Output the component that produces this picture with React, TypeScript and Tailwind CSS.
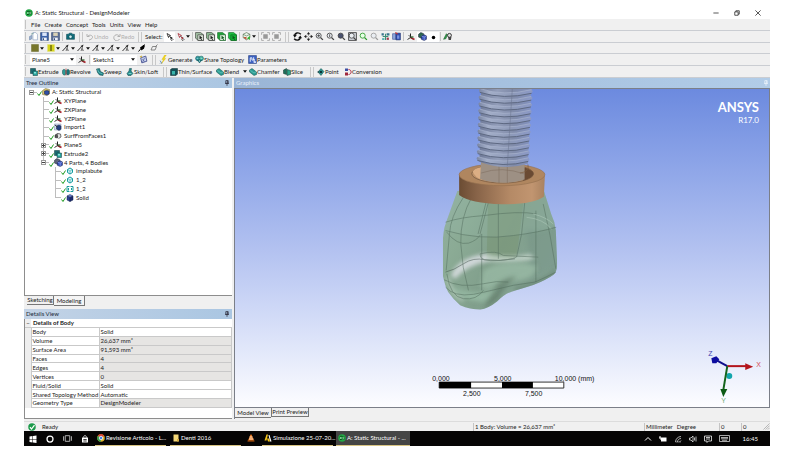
import type { ReactNode } from "react";

type Children = { children?: ReactNode };

/* ---------- icons ---------- */

const Svg = ({ children, size = "size-2" }: Children & { size?: string }) => (
  <svg viewBox="0 0 16 16" className={`${size} shrink-0`} fill="none" aria-hidden="true">
    {children}
  </svg>
);

const Cube = ({ a = "#9fb4e8", b = "#3350a8", c = "#1d2f6e", line = "#15204a" }) => (
  <Svg>
    <path d="M8 1l6 3-6 3-6-3z" fill={a} stroke={line} />
    <path d="M2 4l6 3v8l-6-3z" fill={b} stroke={line} />
    <path d="M14 4L8 7v8l6-3z" fill={c} stroke={line} />
  </Svg>
);

const Parts = ({ back = "#5d6478" }) => (
  <Svg size="size-[9px]">
    <path d="M1 4l4-3 5 2v6l-4 2-5-2z" fill={back} stroke="#22283c" />
    <path d="M6 7l5-2 4 2v6l-4 2-5-2z" fill="#3a55c0" stroke="#15204a" />
    <path d="M6 7l5 2 4-2M11 9v6" stroke="#a9b8ee" />
  </Svg>
);

const Axes = () => (
  <Svg>
    <path d="M7 10V1" stroke="#222" strokeWidth="2" />
    <path d="M7 9l8 4" stroke="#b3202a" strokeWidth="3" />
    <path d="M7 9l-6 4" stroke="#333" strokeWidth="2" />
    <path d="M3 4l9 9" stroke="#333" strokeWidth="1.500" />
    <path d="M7 8h6" stroke="#27602b" strokeWidth="2.500" />
  </Svg>
);

const Save = ({ alt = false }) => (
  <Svg size="size-[9px]">
    <path d="M1 1h14v14H1z" fill={alt ? "#5d6f94" : "#3c62a8"} stroke="#27406f" />
    <path d="M4 1h8v6H4z" fill={alt ? "#d9d2b6" : "#dbe6fa"} />
    <path d="M4 10h8v5H4z" fill="#eef2fa" />
    <path d="M5 11h2v3H5z" fill="#27406f" />
  </Svg>
);

const NewDoc = () => (
  <Svg size="size-[9px]">
    <path d="M7 1h5l3 3v10H7z" fill="#fff" stroke="#7d93b8" />
    <path d="M1 14V8l4-2v6z" fill="#9eb3d2" stroke="#6480a8" />
    <path d="M4 4l4-2" stroke="#8aa" strokeWidth="2" />
  </Svg>
);

const Camera = () => (
  <Svg size="size-[9px]">
    <path d="M1 4h3l2-2h4l2 2h3v9H1z" fill="#0e6f7d" stroke="#0b444e" />
    <circle cx="8" cy="8.500" r="3" fill="#c8f1f4" stroke="#073239" />
  </Svg>
);

const UndoIcon = ({ flip = false }) => (
  <Svg>
    <path
      d={flip ? "M14 2v5H9M13 7a6 6 0 1 0 0 5" : "M2 2v5h5M3 7c4-5 11-2 10 2-1 3-4 4-7 5"}
      stroke="#b0b0b0"
      strokeWidth="2"
    />
  </Svg>
);

const Cursor = ({ color = "#111" }) => (
  <Svg>
    <path d="M2 1l7 4-3 1-1 3z" fill="#fff" stroke={color} strokeWidth="1.500" />
    <path d="M7 6l7 7-2 2-3-2" stroke="#222" strokeWidth="1.500" />
    <path d="M8 8l5 1-3 4z" fill={color} />
  </Svg>
);

const SelBox = ({ front = "#e6e6e6", back = "#5c8f61", line = "#222" }) => (
  <Svg size="size-[9px]">
    <path d="M1 1h9l5 4v10H6l-5-4z" fill={back} stroke={line} />
    <path d="M5 5h10v10H5z" fill={front} stroke={line} />
    <path d="M8 6v7l1.500-1.500 2 3 1-1-1.500-2.500 2-1z" fill={line} />
  </Svg>
);

const Extend = () => (
  <Svg size="size-[9px]">
    <path d="M8 1l6 3v6l-6 4-6-4V4z" fill="#e9f4e6" stroke="#3b5b3b" />
    <path d="M2 4l6 3 6-3" stroke="#4a6b4a" />
    <path d="M9 11l5-4v7z" fill="#2bb02b" />
    <path d="M2 9l6 5v-5z" fill="#c05a3a" />
  </Svg>
);

const Fit = () => (
  <Svg size="size-[9px]">
    <path d="M1 5V1h4M11 1h4v4M15 11v4h-4M5 15H1v-4" stroke="#a5a5a5" strokeWidth="1.500" />
    <path d="M4 4h8v8H4z" fill="#999" />
  </Svg>
);

const Rotate = () => (
  <Svg size="size-[9px]">
    <path d="M14 4C10 0 3 1 3 7M2 12c4 4 11 3 11-3" stroke="#111" strokeWidth="2.500" />
    <path d="M0 5h7L3 10zM9 11h7l-3-5z" fill="#111" />
  </Svg>
);

const Pan = () => (
  <Svg size="size-[9px]">
    <path d="M8 0l3 4H5zM8 16l3-4H5zM0 8l4-3v6zM16 8l-4-3v6z" fill="#222" />
    <path d="M8 4v2M8 10v2M4 8h2M10 8h2" stroke="#333" strokeWidth="1.500" />
  </Svg>
);

const Lens = ({ color = "#444", fill = "#e9edf2", mark = "", box = false }) => (
  <Svg size="size-[9px]">
    {box && <path d="M1 1h14v14H1z" stroke="#444" strokeWidth="1.500" fill="#cfd3da" />}
    <circle cx="6.500" cy="6.500" r="4.500" fill={fill} stroke={color} strokeWidth="1.500" />
    <path d="M10 10l4 4" stroke={color} strokeWidth="2.500" />
    <path d={mark} stroke={color} strokeWidth="1.500" />
  </Svg>
);

const Tree4 = () => (
  <Svg size="size-[9px]">
    <path d="M1 2h4v4H1zM10 2h5v4h-5z" fill="#36748c" />
    <path d="M3 8h10M8 3v11" stroke="#3b8f76" strokeWidth="2" />
    <path d="M2 11h4v3H2z" fill="#4aa" />
    <path d="M10 10h4v4h-4z" fill="#a0384c" />
  </Svg>
);

const LookAt = () => (
  <Svg size="size-[9px]">
    <path d="M1 3h6v10H1z" fill="#8fa6dc" stroke="#334b8f" />
    <path d="M7 2h8v12H7z" fill="#2e4fb2" stroke="#20306b" />
    <path d="M9 6h4v6H9z" fill="#7a93e0" />
    <path d="M6 1l4 3" stroke="#c33" strokeWidth="2" />
  </Svg>
);

const Dot = () => (
  <Svg>
    <circle cx="7" cy="9" r="3.500" fill="#000" />
  </Svg>
);

const Brush = () => (
  <Svg size="size-[9px]">
    <path d="M1 13L6 3l2 2-3 7z" fill="#2c9a4a" stroke="#235c30" />
    <circle cx="11.500" cy="6" r="3.500" fill="#ddd" stroke="#222" strokeWidth="1.500" />
    <path d="M9 9l1 5h4l1-5" fill="#444" />
  </Svg>
);

const LineTool = () => (
  <Svg>
    <path d="M1 14L12 2" stroke="#333" strokeWidth="2" />
    <path d="M7 4l6-3-2 7z" fill="#333" />
    <path d="M8 14l2-6 3 6M9 12h3" stroke="#555" strokeWidth="1.500" />
  </Svg>
);

const Pen = () => (
  <Svg>
    <path d="M1 15L13 1" stroke="#000" strokeWidth="2" />
    <path d="M4 7l7-5 3 1-2 6-5 4z" fill="#000" />
  </Svg>
);

const PlaneOutline = () => (
  <Svg>
    <path d="M5 5h8l-3 7H2z" stroke="#666" strokeWidth="1.500" />
    <path d="M11 5l4-4" stroke="#666" strokeWidth="1.500" />
  </Svg>
);

const Swatch = ({ color = "#77762b", split = false }) => (
  <Svg>
    <path d="M1 1h14v14H1z" fill={color} stroke={split ? "#e4e27a" : "#6b6b2d"} />
    {split && <path d="M8 2v12" stroke="#6e6d10" strokeWidth="3" />}
  </Svg>
);

const NewSketch = () => (
  <Svg size="size-[9px]">
    <path d="M3 5l9-3 2 9-9 3z" fill="#c9d2ef" stroke="#3f4b8c" strokeWidth="1.500" />
    <path d="M6 7l4 5M10 5l-4 8" stroke="#3f4b8c" />
    <path d="M1 3l4-2v4z" fill="#c7a92e" />
  </Svg>
);

const Bolt = () => (
  <Svg size="size-[9px]">
    <path d="M10 0L5 8h3l-4 8 8-10H9l4-6z" fill="#f6d813" stroke="#c2a400" strokeWidth="0.500" />
    <path d="M2 10l3 5M3 14l-1 1" stroke="#477ab4" strokeWidth="1.500" />
  </Svg>
);

const Share = () => (
  <Svg size="size-[9px]">
    <circle cx="5" cy="6" r="4" fill="#2d9aa0" stroke="#10575c" />
    <circle cx="11" cy="6" r="4" fill="#46b8a6" stroke="#10575c" />
    <path d="M4 9l4 5 4-5z" fill="#1f7f86" stroke="#10575c" />
    <path d="M3 6h3M10 6h3M8 9v3" stroke="#d6f5f2" />
  </Svg>
);

const Param = () => (
  <Svg size="size-[9px]">
    <path d="M1 1h14v14H1z" fill="#3d63c4" stroke="#20377b" />
    <path d="M4 12V5h3v4h3V4M11 12V7" stroke="#fff" strokeWidth="1.500" />
    <path d="M10 11h4v3h-4z" fill="#dfe7ff" />
  </Svg>
);

const Solid = ({ shape = "block" }) => {
  const shapes: Record<string, ReactNode> = {
    block: (
      <>
        <path d="M1 1h10v10H1z" fill="#1c6a70" stroke="#0b3438" />
        <path d="M6 6h9v9H6z" fill="#28a39b" stroke="#0b3438" />
        <path d="M8 8h4v3H8z" fill="#8fe3dc" />
      </>
    ),
    revolve: (
      <>
        <path d="M1 6c0-4 5-4 6-1v8c-2 3-6 0-6-3z" fill="#2d9c97" stroke="#124b4b" />
        <path d="M9 5c2-4 6-2 6 1v5c0 3-5 4-6 1z" fill="#1a7379" stroke="#124b4b" />
        <path d="M8 1v14" stroke="#b03030" strokeWidth="1.500" />
      </>
    ),
    sweep: (
      <>
        <path d="M1 2l6-1 2 6 6 3-1 5-7-1-4-5z" fill="#1f868a" stroke="#0d3d40" />
        <path d="M3 3l3 6 7 3" stroke="#9be3dd" />
      </>
    ),
    skin: (
      <>
        <path d="M7 1h4l-1 5 4 5-4 4H4l-2-4 4-5z" fill="#258f90" stroke="#0d3d40" />
        <path d="M5 11h6" stroke="#9be3dd" strokeWidth="1.500" />
      </>
    ),
    thin: (
      <>
        <path d="M1 3l3-2h11v11l-3 3H1z" fill="#134f55" stroke="#08292c" />
        <path d="M4 6h6v7H4z" fill="#39b3a9" />
      </>
    ),
    blend: (
      <>
        <path d="M1 4l5-3 9 7v5l-5 2-9-7z" fill="#2a9c93" stroke="#0f4b48" />
        <path d="M3 5l7 5 4-2" stroke="#8fd8cf" />
      </>
    ),
    slice: (
      <>
        <path d="M1 4l6-3v12l-6-2z" fill="#1d6d58" stroke="#0b332a" />
        <path d="M8 3l7 2v8l-7 2z" fill="#2ea287" stroke="#0b332a" />
      </>
    ),
    point: (
      <>
        <path d="M8 1l6 6-6 8-6-7z" fill="#2a8f8b" stroke="#12504e" />
        <path d="M6 6h4v4H6z" fill="#0a3335" />
        <path d="M1 8h4" stroke="#0a3335" strokeWidth="2" />
      </>
    ),
    convert: (
      <>
        <path d="M2 1h6v5H2z" fill="#3a4ea5" />
        <path d="M2 9h6v6H2z" fill="#a0273c" />
        <path d="M9 3c7 0 7 10 0 10" stroke="#b0304a" strokeWidth="2" />
      </>
    ),
  };
  return <Svg>{shapes[shape]}</Svg>;
};

const BodyIcon = ({ dashed = false }) => (
  <Svg>
    {dashed ? (
      <path d="M2 3h5M9 3h5v10H9M7 13H2V3M5 6v5M11 6v4" stroke="#159a9c" strokeWidth="2" />
    ) : (
      <>
        <path d="M8 2l5 3v6l-5 3-5-3V5z" fill="#d8f4f4" stroke="#149a9f" strokeWidth="2" />
        <path d="M3 5l5 3 5-3M8 8v6" stroke="#149a9f" />
      </>
    )}
  </Svg>
);

const SurfIcon = () => (
  <Svg>
    <path d="M2 6l5-3 3 3-3 6-5-1z" fill="#555" stroke="#222" />
    <path d="M7 3l6 1 1 6-5 3" fill="#e3e3e3" stroke="#444" strokeWidth="1.500" />
  </Svg>
);

const ImportIcon = () => (
  <Svg>
    <path d="M1 2h13v12H1z" fill="#d4dcee" stroke="#7d8bab" />
    <path d="M5 6l5-2 4 2v6l-4 3-5-3z" fill="#243e7b" stroke="#14234a" />
    <path d="M2 4l5 4" stroke="#333" strokeWidth="2" />
  </Svg>
);

const RootIcon = () => (
  <Svg>
    <path d="M1 5l6-4 8 2v9l-5 3-9-2z" fill="#d7c26b" stroke="#6c6843" />
    <path d="M5 6l5-1 4 1v6l-4 2-5-2z" fill="#2f4fa6" stroke="#16234d" />
  </Svg>
);

const Check = () => (
  <span className="flex h-[8px] shrink-0 items-end">
    <svg viewBox="0 0 10 10" className="size-[5px]" fill="none" aria-hidden="true">
      <path d="M1 5l3 4 5-8" stroke="#1d9a1d" strokeWidth="2" />
    </svg>
  </span>
);

const Pin = ({ color = "#334" }) => (
  <svg viewBox="0 0 10 14" className="h-[6px] w-1" fill="none" aria-hidden="true">
    <path d="M2 1h6v7H2zM0 8h10M5 8v6M6 1v7" stroke={color} strokeWidth="2" />
  </svg>
);

const Caret = () => (
  <svg viewBox="0 0 8 5" className="h-[3px] w-1 shrink-0" aria-hidden="true">
    <path d="M0 0h8L4 5z" fill="#111" />
  </svg>
);

const AppIcon = () => (
  <Svg>
    <circle cx="8" cy="8" r="7.500" fill="#22a845" />
    <path d="M3 6c4-4 9 1 9 5M4 11c3 1 7-2 8-6" stroke="#0b4a1c" strokeWidth="2" />
    <path d="M4 8h3M9 8h3" stroke="#d4f5da" strokeWidth="2" />
  </Svg>
);

/* ---------- toolbar parts ---------- */

const Grip = () => <span className="mx-px h-[9px] w-px shrink-0 bg-[#c4c4c4]" />;

const Divider = () => (
  <span className="mx-[3px] flex h-[10px] w-1 shrink-0 justify-between">
    <i className="w-px bg-[#c8c8c8]" />
    <i className="w-px bg-[#c8c8c8]" />
  </span>
);

const Tool = ({
  label,
  w = "w-[11px]",
  on = false,
  drop = false,
  children,
}: Children & { label: string; w?: string; on?: boolean; drop?: boolean }) => (
  <button
    type="button"
    aria-label={label}
    className={`flex h-[10px] ${w} shrink-0 items-center justify-center gap-px ${on ? "bg-white" : ""}`}
  >
    {children}
    {drop && <Caret />}
  </button>
);

const TextTool = ({
  icon,
  w,
  drop = false,
  children,
}: Children & { icon: ReactNode; w: string; drop?: boolean }) => (
  <button type="button" className={`flex ${w} shrink-0 items-center whitespace-nowrap`}>
    {icon}
    <span>{children}</span>
    {drop && (
      <span className="ml-1">
        <Caret />
      </span>
    )}
  </button>
);

const Bar = ({ children, h = "h-3" }: Children & { h?: string }) => (
  <div className={`flex ${h} shrink-0 items-center border-b border-[#cacdd2] bg-[#f0f0f0]`}>
    <Grip />
    {children}
  </div>
);

const Pick = ({ label, value }: { label: string; value: string }) => (
  <label className="relative flex h-[10px] w-[46px] shrink-0 items-center bg-white">
    <select aria-label={label} defaultValue={value} className="w-full appearance-none pl-[2px] leading-none">
      <option>{value}</option>
    </select>
    <span className="pointer-events-none absolute right-[2px] flex">
      <Caret />
    </span>
  </label>
);

const Toolbars = () => (
  <>
    <nav className="flex h-3 shrink-0 items-center border-b border-[#cacdd2] bg-[#f0f0f0] text-[#222]">
      <Grip />
      <div className="ml-1 flex gap-1">
        {["File", "Create", "Concept", "Tools", "Units", "View", "Help"].map((m) => (
          <button type="button" key={m}>
            {m}
          </button>
        ))}
      </div>
    </nav>

    <Bar>
      <span className="w-px" />
      <Tool label="New"><NewDoc /></Tool>
      <Tool label="Save"><Save /></Tool>
      <Tool label="Save As"><Save alt /></Tool>
      <Grip />
      <Tool label="Image Capture" w="w-3"><Camera /></Tool>
      <Divider />
      <div className="flex text-[#b0b0b0]">
        <TextTool icon={<UndoIcon />} w="w-[27px]">Undo</TextTool>
        <TextTool icon={<UndoIcon flip />} w="w-[22px]">Redo</TextTool>
      </div>
      <Divider />
      <span className="w-[19px]">Select:</span>
      <Tool label="New Selection" on><Cursor /></Tool>
      <Tool label="Select Mode" w="w-4" drop><Cursor color="#a3202b" /></Tool>
      <Grip />
      <Tool label="Points"><SelBox front="#dfeadd" back="#a5c4a6" /></Tool>
      <Tool label="Edges"><SelBox front="#e8efe6" back="#8fbf95" /></Tool>
      <Tool label="Faces" on><SelBox front="#e6f5e4" back="#1fa83a" line="#145a20" /></Tool>
      <Tool label="Bodies"><SelBox front="#15b537" back="#1ec544" line="#0b5a1b" /></Tool>
      <Grip />
      <Tool label="Extend Selection" w="w-4" drop><Extend /></Tool>
      <Grip />
      <Tool label="Expand Faces"><Fit /></Tool>
      <Tool label="Shrink Faces"><Fit /></Tool>
      <Divider />
      <Tool label="Rotate"><Rotate /></Tool>
      <Tool label="Pan"><Pan /></Tool>
      <Tool label="Zoom"><Lens mark="M4 6.500h5M6.500 4v5" /></Tool>
      <Tool label="Box Zoom"><Lens mark="M6.500 4v5" /></Tool>
      <Tool label="Zoom to Fit"><Lens fill="#4a5270" /></Tool>
      <Tool label="Magnifier"><Lens box /></Tool>
      <Tool label="Previous View"><Lens color="#2b9a2b" fill="#e6ffe6" /></Tool>
      <Tool label="Next View"><Lens color="#9a9a9a" /></Tool>
      <Tool label="ISO View"><Tree4 /></Tool>
      <Tool label="Look At"><LookAt /></Tool>
      <Grip />
      <Tool label="Display Plane" w="w-3"><Axes /></Tool>
      <Tool label="Display Model" on><Parts back="#2d6a4f" /></Tool>
      <Tool label="Display Points" on><Dot /></Tool>
      <Grip />
      <Tool label="Display Edge Joints"><Brush /></Tool>
    </Bar>

    <Bar h="h-[11px]">
      <span className="w-[2px]" />
      <Tool label="Face Color" w="w-4" drop><Swatch /></Tool>
      <Tool label="Edge Coloring" w="w-4" drop><Swatch color="#d5d31e" split /></Tool>
      {["Free", "Single", "Double", "Triple", "Multiple"].map((n) => (
        <Tool key={n} label={n} w="w-[15px]" drop><LineTool /></Tool>
      ))}
      <Tool label="Edge Direction" w="w-3"><Pen /></Tool>
      <Tool label="Vertices"><PlaneOutline /></Tool>
    </Bar>

    <Bar>
      <span className="w-[3px]" />
      <Pick label="Active plane" value="Plane5" />
      <Tool label="New Plane" w="w-3"><Axes /></Tool>
      <Grip />
      <Pick label="Active sketch" value="Sketch1" />
      <Tool label="New Sketch" w="w-3"><NewSketch /></Tool>
      <Divider />
      <TextTool icon={<Bolt />} w="w-[36px]">Generate</TextTool>
      <TextTool icon={<Share />} w="w-[53px]">Share Topology</TextTool>
      <TextTool icon={<Param />} w="w-[40px]">Parameters</TextTool>
    </Bar>

    <Bar>
      <span className="w-[3px]" />
      <TextTool icon={<Solid />} w="w-8">Extrude</TextTool>
      <TextTool icon={<Solid shape="revolve" />} w="w-[34px]">Revolve</TextTool>
      <TextTool icon={<Solid shape="sweep" />} w="w-[30px]">Sweep</TextTool>
      <TextTool icon={<Solid shape="skin" />} w="w-[34px]">Skin/Loft</TextTool>
      <Divider />
      <TextTool icon={<Solid shape="thin" />} w="w-[46px]">Thin/Surface</TextTool>
      <TextTool icon={<Solid shape="blend" />} w="w-[33px]" drop>Blend</TextTool>
      <TextTool icon={<Solid shape="blend" />} w="w-[34px]">Chamfer</TextTool>
      <TextTool icon={<Solid shape="slice" />} w="w-6">Slice</TextTool>
      <Divider />
      <TextTool icon={<Solid shape="point" />} w="w-[27px]">Point</TextTool>
      <TextTool icon={<Solid shape="convert" />} w="w-[40px]">Conversion</TextTool>
    </Bar>
  </>
);

/* ---------- left column ---------- */

const PanelHead = ({ children }: Children) => (
  <h2 className="flex h-[10px] shrink-0 items-center justify-between bg-linear-to-r from-[#c3d3e6] to-[#aac6e2] pr-[3px] pl-[2px] text-[#1b2a3a]">
    <span>{children}</span>
    <Pin />
  </h2>
);

type Node = { depth: number; label: string; icon: ReactNode; box?: "+" | "-"; last?: boolean };

const nodes: Node[] = [
  { depth: 0, label: "A: Static Structural", icon: <RootIcon />, box: "-", last: true },
  { depth: 1, label: "XYPlane", icon: <Axes /> },
  { depth: 1, label: "ZXPlane", icon: <Axes /> },
  { depth: 1, label: "YZPlane", icon: <Axes /> },
  { depth: 1, label: "Import1", icon: <ImportIcon /> },
  { depth: 1, label: "SurfFromFaces1", icon: <SurfIcon /> },
  { depth: 1, label: "Plane5", icon: <Axes />, box: "+" },
  { depth: 1, label: "Extrude2", icon: <Solid />, box: "+" },
  { depth: 1, label: "4 Parts, 4 Bodies", icon: <Parts />, box: "-", last: true },
  { depth: 2, label: "implabute", icon: <BodyIcon /> },
  { depth: 2, label: "1_2", icon: <BodyIcon /> },
  { depth: 2, label: "1_2", icon: <BodyIcon dashed /> },
  { depth: 2, label: "Solid", icon: <Cube a="#6f86d8" b="#2b3f98" c="#1c2a70" />, last: true },
];

const indents = ["pl-1", "pl-4", "pl-[28px]"];

const Branch = ({ node }: { node: Node }) => (
  <span className="flex w-2 shrink-0 items-center self-stretch">
    <span className="flex w-[5px] flex-col items-center self-stretch">
      <i className={`w-px flex-1 ${node.depth ? "bg-[#bdbdbd]" : ""}`} />
      {node.box && (
        <svg viewBox="0 0 5 5" className="size-[5px]" shapeRendering="crispEdges" aria-hidden="true">
          <path d="M0 0h5v5H0z" fill="#9a9a9a" />
          <path d="M1 1h3v3H1z" fill="#fff" />
          <path d={node.box === "+" ? "M1 2h3v1H1zM2 1h1v3H2z" : "M1 2h3v1H1z"} fill="#444" />
        </svg>
      )}
      <i className={`w-px flex-1 ${node.last ? "" : "bg-[#bdbdbd]"}`} />
    </span>
    <i className={`h-px flex-1 bg-[#bdbdbd] ${node.box ? "" : "-ml-[2px]"}`} />
  </span>
);

const TreePanel = () => (
  <section className="flex min-h-0 flex-1 flex-col">
    <PanelHead>Tree Outline</PanelHead>
    <div className="min-h-0 flex-1 border-b border-l border-[#8d8d8d] bg-white">
      <ul className="grid h-[114px] auto-rows-fr">
        {nodes.map((n, i) => (
          <li key={i} className={`flex items-center ${indents[n.depth]}`}>
            <Branch node={n} />
            <Check />
            <span className="flex w-[10px] shrink-0">{n.icon}</span>
            <span className="whitespace-nowrap">{n.label}</span>
          </li>
        ))}
      </ul>
    </div>
    <div className="flex h-[10px] shrink-0 items-start pl-[3px]">
      <button type="button" className="h-[9px] w-[27px] border-r border-b border-[#777]">Sketching</button>
      <button type="button" className="h-[10px] w-[31px] border-r border-b border-[#777] bg-[#f4f4f4]">Modeling</button>
    </div>
  </section>
);

const details: [string, string, boolean][] = [
  ["Body", "Solid", false],
  ["Volume", "26,637 mm³", true],
  ["Surface Area", "91,593 mm³", true],
  ["Faces", "4", true],
  ["Edges", "4", true],
  ["Vertices", "0", true],
  ["Fluid/Solid", "Solid", false],
  ["Shared Topology Method", "Automatic", false],
  ["Geometry Type", "DesignModeler", true],
];

const DetailsPanel = () => (
  <section className="mt-[3px] flex h-[110px] shrink-0 flex-col">
    <PanelHead>Details View</PanelHead>
    <div className="flex-1 border-b border-l border-[#8d8d8d] bg-white">
      <table className="h-[89px] w-full table-fixed border-collapse leading-[7px]">
        <colgroup>
          <col className="w-[6px]" />
          <col className="w-[68px]" />
          <col />
        </colgroup>
        <tbody>
          <tr className="border-b border-[#c9c9c9]">
            <td className="bg-[#eee] text-center">−</td>
            <th colSpan={2} className="pl-[2px] text-left font-bold">Details of Body</th>
          </tr>
          {details.map(([k, v, ro]) => (
            <tr key={k}>
              <td className="bg-[#eee]" />
              <th scope="row" className="border border-[#c9c9c9] pl-px text-left font-normal whitespace-nowrap">{k}</th>
              <td className={`border border-[#c9c9c9] pl-px ${ro ? "bg-[#e6e5e3]" : ""}`}>{v}</td>
            </tr>
          ))}
        </tbody>
      </table>
    </div>
  </section>
);

/* ---------- model view ---------- */

const threads = Array.from({ length: 11 }, (_, i) => i);

const Model = () => (
  <svg viewBox="235 88 534 319" className="absolute inset-0 size-full" fill="none" role="img" aria-label="Implant, abutment ring and tooth crown">
    <defs>
      <linearGradient id="screw" x1="0" x2="1" y1="0" y2="0">
        <stop offset="0" stopColor="#6f7a98" />
        <stop offset="0.35" stopColor="#929db9" />
        <stop offset="0.65" stopColor="#808ba9" />
        <stop offset="1" stopColor="#8291bf" />
      </linearGradient>
      <linearGradient id="ridge" x1="0" x2="1" y1="0" y2="0">
        <stop offset="0" stopColor="#7a86a4" />
        <stop offset="0.2" stopColor="#a3aec8" />
        <stop offset="0.6" stopColor="#8e9ab8" />
        <stop offset="1" stopColor="#8b99c6" />
      </linearGradient>
      <linearGradient id="ring" x1="0" x2="1" y1="0" y2="0">
        <stop offset="0" stopColor="#6b4c33" />
        <stop offset="0.2" stopColor="#876348" />
        <stop offset="0.6" stopColor="#b58a66" />
        <stop offset="0.85" stopColor="#c19570" />
        <stop offset="1" stopColor="#a98260" />
      </linearGradient>
      <linearGradient id="tooth" x1="0" x2="1" y1="0" y2="0.5">
        <stop offset="0" stopColor="#94b0a2" />
        <stop offset="0.3" stopColor="#8bab95" />
        <stop offset="0.6" stopColor="#819f8c" />
        <stop offset="1" stopColor="#86a596" />
      </linearGradient>
      <filter id="soft" x="-20%" y="-40%" width="140%" height="180%">
        <feGaussianBlur stdDeviation="7" />
      </filter>
      <clipPath id="crown">
        <path d="M112 0L78 95Q68 120 68 160V255Q74 285 84 305Q100 328 120 345Q150 358 180 358Q205 355 232 333Q252 312 275 304Q300 296 340 284Q380 268 402 252Q412 244 412 220L408 120Q406 95 394 70L372 0z" />
      </clipPath>
    </defs>

    {/* crown */}
    <g transform="translate(420 190) scale(.333333)">
      <g clipPath="url(#crown)">
        <path d="M50 -20h380v400H50z" fill="url(#tooth)" />
        <path d="M205 0h110l-25 200q-50 15-90 0z" fill="#7b9779" opacity=".7" />
        <path d="M66 120q180 45 348-15v-100H100z" fill="#9cbfae" opacity=".2" />
        <path d="M320 120q60 10 95-20v130l-80 30z" fill="#6f8d81" opacity=".35" filter="url(#soft)" />
        <path d="M92 255Q115 200 200 190Q215 205 205 212Q140 225 105 265z" fill="#dcdfe4" opacity=".85" filter="url(#soft)" />
        <path d="M200 192Q280 205 330 190L345 205Q280 220 205 212z" fill="#d5e2da" opacity=".75" filter="url(#soft)" />
        <path d="M190 240Q240 205 350 225Q360 265 260 275Q210 310 180 290z" fill="#9cbda7" opacity=".7" filter="url(#soft)" />
        <path d="M215 300Q240 262 290 258Q250 290 235 330L190 360z" fill="#657f6d" opacity=".7" filter="url(#soft)" />
        <path d="M280 290Q370 265 412 230V270L290 310z" fill="#647f6e" opacity=".5" filter="url(#soft)" />
        <path d="M90 290Q120 330 190 335Q220 310 235 290Q180 320 110 295z" fill="#9bc0a9" opacity=".7" filter="url(#soft)" />
        <path d="M82 260Q95 320 130 330" stroke="#d6e3da" strokeWidth="5" filter="url(#soft)" />
      </g>
      <g stroke="#4f6859" strokeWidth="2" opacity=".7">
        <path d="M155 20Q120 80 122 160Q125 230 145 300" />
        <path d="M130 20Q90 80 88 130L78 240" />
        <path d="M205 35L180 130M198 35L174 130" />
        <path d="M185 130V300M235 40V205M315 30L305 130L290 200" />
        <path d="M348 60V275M370 40Q392 130 408 235" />
        <path d="M76 95Q120 80 190 75Q300 60 350 70M76 120Q180 150 280 135Q360 125 409 110" />
        <path d="M80 125Q110 165 145 158Q170 150 182 132" />
        <path d="M320 80Q370 85 395 115M340 70Q380 80 400 100" stroke="#b5d0c0" />
        <path d="M76 245Q100 240 130 220Q160 200 195 208Q240 213 285 205" stroke="#3d4c45" />
        <path d="M180 190Q175 215 240 210Q290 205 290 198M180 190Q230 178 250 195L355 200" />
        <path d="M72 268Q120 295 190 280Q230 270 265 275" />
        <path d="M76 290Q100 320 160 312Q195 305 215 300Q280 282 345 275Q380 260 408 245" />
        <path d="M80 250Q90 320 130 325Q170 330 190 300" />
      </g>
    </g>

    {/* ring and screw */}
    <g transform="translate(420 85) scale(.333333)">
      <path d="M117 267V328Q150 353 246 356Q340 356 372 333L375 270z" fill="url(#ring)" />
      <ellipse cx="246" cy="267" rx="129" ry="33" fill="#b0865f" stroke="#967150" strokeWidth="2" />
      <ellipse cx="248" cy="264" rx="93" ry="28" fill="#bd9169" stroke="#6e5540" strokeWidth="2" />
      <path d="M305 243Q341 251 341 265Q338 277 310 285z" fill="#6a4a33" />
      <path d="M158 258Q165 276 186 282V244Q162 248 158 258z" fill="#dcae84" />
      <path d="M183 226L180 280Q245 302 314 281V230z" fill="#9d9084" />
      <path d="M183 262Q245 240 314 265M237 240v52M262 240v52" stroke="#7b6a5c" strokeWidth="1.500" />
      <path d="M183 9H334L324 234Q250 256 178 228z" fill="url(#screw)" />
      {threads.map((i) => {
        const y = 8 + i * 20.5;
        const l = 179 - i * 0.7;
        const r = 337 - i;
        return (
          <g key={i}>
            <path
              d={`M${l + 2} ${y}Q${l - 7} ${y + 5} ${l + 2} ${y + 11}Q250 ${y + 33} ${r - 2} ${y + 13}Q${r + 5} ${y + 7} ${r - 2} ${y + 3}Q250 ${y + 23} ${l + 2} ${y}z`}
              fill="url(#ridge)"
            />
            <path d={`M${l + 2} ${y}Q250 ${y + 24} ${r - 2} ${y + 3}`} stroke="#aab5cf" strokeWidth="2" />
            <path d={`M${l} ${y + 11}Q250 ${y + 34} ${r - 2} ${y + 14}`} stroke="#5d6882" strokeWidth="3" />
          </g>
        );
      })}
      <path d="M277 9L262 240" stroke="#69738e" strokeWidth="1.500" />
      <path d="M300 262Q330 258 324 236" stroke="#7c5b3d" strokeWidth="2" />
    </g>

    {/* scale */}
    <g className="font-['Liberation_Sans',sans-serif] text-[7px]" fill="#111">
      <text x="432" y="381">0,000</text>
      <text x="494" y="381">5,000</text>
      <text x="555" y="381">10,000 (mm)</text>
      <text x="463" y="396">2,500</text>
      <text x="525" y="396">7,500</text>
      <path d="M439 382h125v6H439z" fill="#fff" stroke="#333" />
      <path d="M439 382h32v6h-32zM502 382h31v6h-31z" fill="#000" />
    </g>

    {/* triad */}
    <g>
      <circle cx="730" cy="376" r="3" fill="#12a5ac" />
      <path d="M728 366L717 360" stroke="#10108c" strokeWidth="2" />
      <path d="M712 358l5-2 3 3-3 4h-4z" fill="#0c0ca0" />
      <path d="M728 366h20" stroke="#b3141c" strokeWidth="2" />
      <path d="M746 363l8 3.500-8 3.500z" fill="#b3141c" />
      <path d="M728 366l-4 24" stroke="#15641c" strokeWidth="2" />
      <path d="M721 389h7l-4 8z" fill="#0c5a14" />
      <g className="font-['Liberation_Sans',sans-serif] text-[7px]">
        <text x="709" y="356" fill="#3f3fae">Z</text>
        <text x="757" y="367" fill="#d34a55">X</text>
        <text x="722" y="403" fill="#74b07b">Y</text>
      </g>
    </g>
  </svg>
);

const Graphics = () => (
  <main className="flex min-w-0 flex-1 flex-col">
    <h2 className="flex h-[10px] shrink-0 items-center justify-between bg-linear-to-r from-[#9ab5d6] to-[#b2cde8] px-[2px] text-[#e9f1fa]">
      <span>Graphics</span>
      <Pin color="#e9f1fa" />
    </h2>
    <div className="relative min-h-0 flex-1 border-t border-r border-b border-l border-[#7b7f88] bg-linear-to-b from-[#6c8adf] via-[#b2c1f0] to-[#fdfdff]">
      <Model />
      <div className="absolute top-[10px] right-[10px] text-right font-['Lato',sans-serif] text-white">
        <p className="text-[13px] leading-4 font-bold">ANSYS</p>
        <p className="text-[8px] leading-[10px]">R17.0</p>
      </div>
    </div>
    <div className="flex h-[11px] shrink-0 items-start border-l border-[#7b7f88] whitespace-nowrap">
      <button type="button" className="h-[10px] w-[36px] border-b border-[#777]">Model View</button>
      <button type="button" className="h-[9px] w-[38px] border border-t-0 border-[#777]">Print Preview</button>
    </div>
  </main>
);

/* ---------- status and task bars ---------- */

const StatusBar = () => (
  <footer className="mt-[2px] flex h-[10px] shrink-0 items-center border-t border-[#dcdcdc] bg-[#f0f0f0] text-[#222]">
    <span className="flex flex-1 items-center gap-[6px] pl-1">
      <Svg>
        <circle cx="8" cy="8" r="7.500" fill="#1b9a4a" />
        <path d="M4 8l3 4 6-8" stroke="#fff" strokeWidth="2.500" />
      </Svg>
      Ready
    </span>
    <span className="w-[171px] border-l border-[#c4c4c4] pl-px">1 Body: Volume = 26,637 mm³</span>
    <span className="flex w-[75px] gap-1 border-l border-[#c4c4c4] pl-px">
      <span>Millimeter</span>
      <span>Degree</span>
    </span>
    <span className="w-[22px] border-l border-[#c4c4c4] pl-px">0</span>
    <span className="w-[22px] border-l border-[#c4c4c4] pl-px">0</span>
    <Svg size="size-[7px]">
      <path d="M15 1L1 15M15 6l-9 9M15 11l-4 4" stroke="#999" strokeWidth="1.500" />
    </Svg>
  </footer>
);

const Task = ({
  icon,
  w,
  line = true,
  active = false,
  label,
  children,
}: Children & { icon: ReactNode; w: string; line?: boolean; active?: boolean; label?: string }) => (
  <button
    type="button"
    aria-label={label}
    className={`flex ${w} shrink-0 items-center gap-px border-b pl-[2px] whitespace-nowrap ${line ? "border-[#d9c583]" : "border-transparent"} ${active ? "bg-[#454545]" : ""}`}
  >
    {icon}
    {children}
  </button>
);

const TaskBar = () => (
  <footer className="flex h-[15px] shrink-0 items-stretch bg-[#060505] text-white">
    <div className="flex w-[71px] items-center gap-[9px] pl-[5px]">
      <Svg>
        <path d="M1 3l6-1v6H1zM8 2l7-1v7H8zM1 9h6v6l-6-1zM8 9h7v7l-7-1z" fill="#fff" />
      </Svg>
      <Svg>
        <circle cx="8" cy="8" r="6" stroke="#fff" strokeWidth="2.500" />
      </Svg>
      <Svg size="size-[9px]">
        <path d="M4 3h8v10H4zM1 4v8M15 4v8" stroke="#ccc" strokeWidth="1.500" />
      </Svg>
      <Svg>
        <path d="M2 5h12v10H2z" fill="#fff" />
        <path d="M5 5c0-5 6-5 6 0" stroke="#fff" strokeWidth="1.500" />
        <path d="M5 8h2.500v2H5zM8.500 8H11v2H8.500zM5 11h2.500v2H5zM8.500 11H11v2H8.500z" fill="#000" />
      </Svg>
    </div>
    <Task
      w="w-[71px]"
      icon={
        <Svg>
          <circle cx="8" cy="8" r="7.500" fill="#e0b42a" />
          <path d="M8 8L1.500 4a7.500 7.500 0 0 1 13 0z" fill="#d8402f" />
          <path d="M8 8L1.500 4a7.500 7.500 0 0 0 6 11.500z" fill="#2f9b4b" />
          <circle cx="8" cy="8" r="3.500" fill="#4a86e8" stroke="#fff" strokeWidth="1.500" />
        </Svg>
      }
    >
      Revisione Articolo - L...
    </Task>
    <span className="w-1" />
    <Task
      w="w-[71px]"
      icon={
        <Svg>
          <path d="M3 1h10v14H3z" fill="#f4d777" />
          <path d="M10 10h4v5h-4z" fill="#d7ac3d" />
        </Svg>
      }
    >
      Denti 2016
    </Task>
    <Task
      w="w-[21px]"
      line={false}
      label="VLC"
      icon={
        <span className="pl-1">
          <Svg>
            <path d="M7 1h2l5 12H2z" fill="#ee7a1d" />
            <path d="M5 6h6M4 10h9" stroke="#fff" strokeWidth="1.500" />
            <path d="M1 13h14v2H1z" fill="#c95e10" />
          </Svg>
        </span>
      }
    />
    <Task
      w="w-[71px]"
      icon={
        <Svg>
          <path d="M1 13L5 1h3L5 13z" fill="#f5c518" />
          <path d="M9 2l2 0 4 13h-3z" fill="#fff" />
          <path d="M6 9h4l2 6H8z" fill="#f5c518" />
        </Svg>
      }
    >
      Simulazione 25-07-20...
    </Task>
    <span className="w-[3px]" />
    <Task w="w-[74px]" active icon={<AppIcon />}>
      A: Static Structural - ...
    </Task>
    <span className="flex-1" />
    <div className="flex items-center gap-[7px] pr-[12px]">
      <Svg>
        <path d="M2 11l6-6 6 6" stroke="#fff" strokeWidth="2" />
      </Svg>
      <Svg>
        <path d="M4 5h11v8H4z" fill="#fff" />
        <path d="M0 4h4M2 4v4h3" stroke="#fff" strokeWidth="2" />
      </Svg>
      <Svg>
        <path d="M3 14C3 8 8 3 14 3M7 14c0-4 3-7 7-7M11 14l3-3" stroke="#ddd" strokeWidth="1.500" />
        <path d="M3 14h11" stroke="#ddd" />
      </Svg>
      <Svg>
        <path d="M1 6h3l4-4v12l-4-4H1zM11 5v6M14 3v10" stroke="#eee" strokeWidth="1.500" />
      </Svg>
      <Svg>
        <path d="M1 2h14v10H9l-3 3v-3H1zM4 5h8M4 8h8" stroke="#fff" strokeWidth="1.500" />
      </Svg>
      <svg viewBox="0 0 22 14" className="h-[7px] w-[11px]" fill="none" aria-hidden="true">
        <path d="M1 1h20v12H1zM4 5h14M4 7.500h14M6 10.500h10" stroke="#ddd" strokeWidth="1.500" />
      </svg>
      <span className="pl-[6px]">16:45</span>
    </div>
  </footer>
);

export default function App() {
  return (
    <div className="h-screen bg-white pt-[6px] pr-[25px] pb-[14px] pl-6 font-['Lato',sans-serif] text-[6px] leading-[8px] text-[#1a1a1a]">
      <div className="flex h-full flex-col bg-[#f0f0f0]">
        <header className="flex h-[13px] shrink-0 items-center justify-between bg-white pr-[9px] pl-px">
          <h1 className="flex items-center gap-[2px]">
            <AppIcon />
            A: Static Structural - DesignModeler
          </h1>
          <div className="flex gap-[15px]">
            <button type="button" aria-label="Minimize">
              <Svg size="size-[6px]"><path d="M1 8h14" stroke="#222" strokeWidth="2" /></Svg>
            </button>
            <button type="button" aria-label="Restore">
              <Svg size="size-[6px]"><path d="M2 5h9v9H2zM5 5V2h9v9h-3" stroke="#222" strokeWidth="2" /></Svg>
            </button>
            <button type="button" aria-label="Close">
              <Svg size="size-[6px]"><path d="M1 1l14 14M15 1L1 15" stroke="#222" strokeWidth="2" /></Svg>
            </button>
          </div>
        </header>
        <Toolbars />
        <div className="flex min-h-0 flex-1 gap-[2px]">
          <aside className="flex w-[208px] shrink-0 flex-col">
            <TreePanel />
            <DetailsPanel />
          </aside>
          <Graphics />
        </div>
        <StatusBar />
        <TaskBar />
      </div>
    </div>
  );
}
